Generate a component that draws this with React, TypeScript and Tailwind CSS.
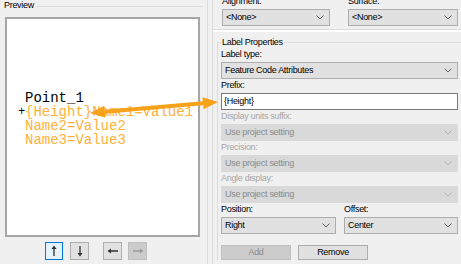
import React from "react";

const ui = { fontFamily: '"Liberation Sans", Arial, sans-serif' };
const mono = { fontFamily: '"Liberation Mono", "Courier New", monospace' };

function Chevron({ disabled }: { disabled?: boolean }) {
  return (
    <svg width="8" height="5" viewBox="0 0 8 5">
      <polyline
        points="0.5,0.5 4,4 7.5,0.5"
        fill="none"
        stroke={disabled ? "#b4b4b4" : "#606060"}
        strokeWidth="1"
      />
    </svg>
  );
}

function Select({ text, disabled, w }: { text: string; disabled?: boolean; w?: string }) {
  const base = "h-[17px] flex items-center justify-between pl-[3px] pr-[5px] border";
  const look = disabled
    ? "bg-[#d9d9d9] border-[#d9d9d9] text-[#8a8a8a]"
    : "bg-[#e1e1e1] border-[#adadad] text-black";
  return (
    <div className={`${base} ${look} ${w ?? "w-full"}`}>
      <span>{text}</span>
      <Chevron disabled={disabled} />
    </div>
  );
}

function Label({ text, disabled }: { text: string; disabled?: boolean }) {
  return (
    <div className={disabled ? "h-[14px] flex items-center text-[#a6a6a6]" : "h-[14px] flex items-center text-black"}>
      {text}
    </div>
  );
}

function ArrowBtn({ dir, active, disabled }: { dir: "up" | "down" | "left" | "right"; active?: boolean; disabled?: boolean }) {
  const cls = active
    ? "w-[18px] h-[18px] border border-[#0078d7] bg-[#e5f1fb] flex items-center justify-center"
    : disabled
    ? "w-[19px] h-[18px] border border-[#bfbfbf] bg-[#cccccc] flex items-center justify-center"
    : "w-[19px] h-[18px] border border-[#adadad] bg-[#e1e1e1] flex items-center justify-center";
  const c = disabled ? "#9a9a9a" : "#303030";
  const rot = dir === "up" ? 0 : dir === "down" ? 180 : dir === "left" ? 270 : 90;
  return (
    <div className={cls}>
      <svg width="12" height="12" viewBox="0 0 12 12" style={{ transform: `rotate(${rot}deg)` }}>
        <line x1="6" y1="2" x2="6" y2="11" stroke={c} strokeWidth="1.3" />
        <polygon points="6,0.5 3.5,4 8.5,4" fill={c} />
      </svg>
    </div>
  );
}

export default function App() {
  return (
    <div className="relative w-[461px] h-[264px] overflow-hidden bg-[#f0f0f0] flex text-[9px] tracking-[-0.3px]" style={ui}>
      {/* Left column */}
      <div className="w-[207px] flex flex-col">
        <div className="h-[12px] flex items-center pl-[4px] pr-[4px]">
          <span className="text-black">Preview</span>
          <div className="flex-1 h-px bg-[#dcdcdc] ml-[3px]" />
        </div>
        <div className="mt-[5px] ml-[5px] w-[195px] h-[220px] border-2 border-[#a6a6a6] bg-white flex flex-col pt-[72px] pl-[11px] text-[14px] leading-[14px] tracking-normal" style={mono}>
          <div className="flex">
            <span className="w-[7px]" />
            <span className="text-black">Point_1</span>
          </div>
          <div className="flex">
            <span className="w-[7px] text-black text-[12px]">+</span>
            <span className="text-[#ffb13b] whitespace-nowrap">{"{Height}Name1=Value1"}</span>
          </div>
          <div className="flex">
            <span className="w-[7px]" />
            <span className="text-[#ffb13b]">Name2=Value2</span>
          </div>
          <div className="flex">
            <span className="w-[7px]" />
            <span className="text-[#ffb13b]">Name3=Value3</span>
          </div>
        </div>
        <div className="mt-[5px] pl-[45px] flex">
          <ArrowBtn dir="up" active />
          <div className="ml-[7px]"><ArrowBtn dir="down" /></div>
          <div className="ml-[14px]"><ArrowBtn dir="left" /></div>
          <div className="ml-[6px]"><ArrowBtn dir="right" disabled /></div>
        </div>
      </div>

      {/* separator */}
      <div className="w-[6px] border-l border-[#dcdcdc] border-r" />

      {/* Right column */}
      <div className="flex-1 flex flex-col">
        <div className="h-[9px] overflow-hidden">
          <div className="-mt-[5px] flex pl-[9px]">
            <span className="w-[126px]">Alignment:</span>
            <span>Surface:</span>
          </div>
        </div>
        <div className="flex pl-[9px] gap-[18px]">
          <Select text="<None>" w="w-[108px]" />
          <Select text="<None>" w="w-[110px]" />
        </div>
        <div className="mt-[3px] h-px bg-[#dcdcdc]" />
        <div className="h-[2px] bg-white" />

        {/* Label Properties group */}
        <div className="mt-[5px] ml-[4px] flex flex-col">
          <div className="h-[11px] flex items-center">
            <div className="w-[4px] h-[6px] self-end border-l border-t border-[#dcdcdc]" />
            <span className="px-[1px]">Label Properties</span>
            <div className="flex-1 h-px bg-[#dcdcdc]" />
          </div>
          <div className="border-l border-[#dcdcdc] pl-[3px] pr-[3px] flex flex-col">
            <Label text="Label type:" />
            <Select text="Feature Code Attributes" />
            <Label text="Prefix:" />
            <div className="h-[17px] bg-white border border-[#7a7a7a] flex items-center pl-[2px]">{"{Height}"}</div>
            <Label text="Display units suffix:" disabled />
            <Select text="Use project setting" disabled />
            <Label text="Precision:" disabled />
            <Select text="Use project setting" disabled />
            <Label text="Angle display:" disabled />
            <Select text="Use project setting" disabled />
            <div className="flex gap-[8px]">
              <div className="flex flex-col w-[115px]">
                <Label text="Position:" />
                <Select text="Right" />
              </div>
              <div className="flex flex-col flex-1">
                <Label text="Offset:" />
                <Select text="Center" />
              </div>
            </div>
            <div className="mt-[11px] flex gap-[7px]">
              <div className="w-[70px] h-[15px] border border-[#bfbfbf] bg-[#cccccc] text-[#8a8a8a] flex items-center justify-center">Add</div>
              <div className="w-[70px] h-[15px] border border-[#adadad] bg-[#e1e1e1] text-black flex items-center justify-center">Remove</div>
            </div>
          </div>
        </div>
      </div>

      {/* Orange double arrow overlay */}
      <svg className="absolute left-0 top-0 pointer-events-none" width="461" height="264" viewBox="0 0 461 264">
        <line x1="104.9" y1="111.7" x2="203.1" y2="103.3" stroke="#f7a21b" strokeWidth="4" />
        <polygon points="90,113 105.5,117.7 104.4,105.7" fill="#f7a21b" />
        <polygon points="218,102 203.6,109.3 202.5,97.3" fill="#f7a21b" />
      </svg>
    </div>
  );
}
